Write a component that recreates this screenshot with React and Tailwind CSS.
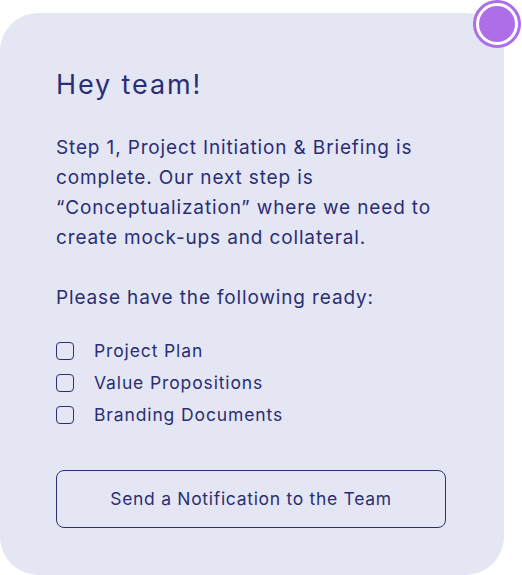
export default function App() {
  const items = ['Project Plan', 'Value Propositions', 'Branding Documents']

  return (
    <div className="relative w-[522px] h-[575px] bg-white font-['Inter',sans-serif] text-[#2b2e74]">
      <div className="absolute left-0 top-[13px] w-[504px] h-[562px] bg-[#e4e6f4] rounded-[38px] pl-[56px] pr-[30px] pt-[54px]">
        <h1 className="text-[27px] leading-[36px] font-normal tracking-[0.07em]">Hey team!</h1>

        <p className="mt-[30px] text-[19px] leading-[30px] tracking-[0.045em]">
          Step 1, Project Initiation &amp; Briefing is<br />
          complete. Our next step is<br />
          “Conceptualization” where we need to<br />
          create mock-ups and collateral.
        </p>
        <p className="mt-[30px] text-[19px] leading-[30px] tracking-[0.045em]">Please have the following ready:</p>

        <ul className="mt-[26px] flex flex-col gap-[8px]">
          {items.map((item) => (
            <li key={item} className="flex items-center gap-[20px] h-[24px]">
              <span className="w-[18px] h-[18px] rounded-[4px] border-[1.5px] border-[#2b2e74]" />
              <span className="text-[17.5px] tracking-[0.05em]">{item}</span>
            </li>
          ))}
        </ul>

        <button className="mt-[43px] w-[390px] h-[58px] rounded-[8px] border border-[#2b2e74] text-[17.5px] tracking-[0.04em] text-[#2b2e74]">
          Send a Notification to the Team
        </button>
      </div>

      <div className="absolute left-[473px] top-0 w-[48px] h-[48px] rounded-full border-[3px] border-[#ad6ee8] bg-white p-[3px]">
        <div className="w-full h-full rounded-full bg-[#ad6ee8]" />
      </div>
    </div>
  )
}
